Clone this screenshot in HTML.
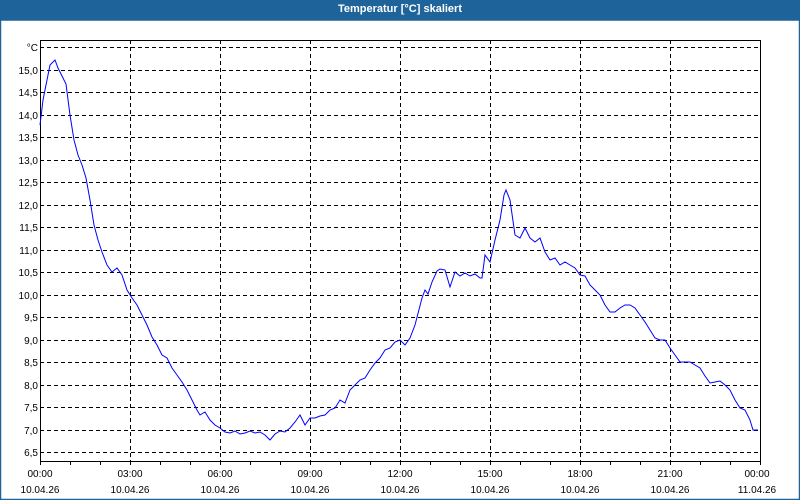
<!DOCTYPE html>
<html><head><style>
html,body{margin:0;padding:0;width:800px;height:500px;overflow:hidden;background:#fff;}
.t{position:absolute;left:0;top:0;width:800px;height:20px;background:#1e6399;color:#fff;font:bold 11px "Liberation Sans",sans-serif;text-align:center;line-height:19px;}
svg{position:absolute;left:0;top:0;}
text{font-family:"Liberation Sans",sans-serif;font-size:10px;fill:#000;}
</style></head><body>
<div class="t">Temperatur [°C] skaliert</div>
<svg width="800" height="500">
<rect x="0.5" y="20" width="799" height="479.5" fill="none" stroke="#1e6399" stroke-width="1.5"/>
<g stroke="#000" stroke-dasharray="4,3" stroke-width="1">
<line x1="40" x2="760" y1="47.5" y2="47.5"/><line x1="40" x2="760" y1="70.5" y2="70.5"/><line x1="40" x2="760" y1="92.5" y2="92.5"/><line x1="40" x2="760" y1="115.5" y2="115.5"/><line x1="40" x2="760" y1="137.5" y2="137.5"/><line x1="40" x2="760" y1="160.5" y2="160.5"/><line x1="40" x2="760" y1="182.5" y2="182.5"/><line x1="40" x2="760" y1="205.5" y2="205.5"/><line x1="40" x2="760" y1="227.5" y2="227.5"/><line x1="40" x2="760" y1="250.5" y2="250.5"/><line x1="40" x2="760" y1="272.5" y2="272.5"/><line x1="40" x2="760" y1="295.5" y2="295.5"/><line x1="40" x2="760" y1="317.5" y2="317.5"/><line x1="40" x2="760" y1="340.5" y2="340.5"/><line x1="40" x2="760" y1="362.5" y2="362.5"/><line x1="40" x2="760" y1="385.5" y2="385.5"/><line x1="40" x2="760" y1="407.5" y2="407.5"/><line x1="40" x2="760" y1="430.5" y2="430.5"/><line x1="40" x2="760" y1="452.5" y2="452.5"/>
<line x1="130.5" x2="130.5" y1="40" y2="461"/><line x1="220.5" x2="220.5" y1="40" y2="461"/><line x1="310.5" x2="310.5" y1="40" y2="461"/><line x1="400.5" x2="400.5" y1="40" y2="461"/><line x1="490.5" x2="490.5" y1="40" y2="461"/><line x1="580.5" x2="580.5" y1="40" y2="461"/><line x1="670.5" x2="670.5" y1="40" y2="461"/>
</g>
<path d="M40.5 461V40.5H760.5V461M40 461.5H761" fill="none" stroke="#000"/>
<g stroke="#000">
<path d="M40.5 461v4M70.5 461v4M100.5 461v4M130.5 461v4M160.5 461v4M190.5 461v4M220.5 461v4M250.5 461v4M280.5 461v4M310.5 461v4M340.5 461v4M370.5 461v4M400.5 461v4M430.5 461v4M460.5 461v4M490.5 461v4M520.5 461v4M550.5 461v4M580.5 461v4M610.5 461v4M640.5 461v4M670.5 461v4M700.5 461v4M730.5 461v4M760.5 461v4"/>
</g>
<g text-anchor="end">
<text x="38" y="51">°C</text><text x="38" y="74">15,0</text><text x="38" y="96">14,5</text><text x="38" y="119">14,0</text><text x="38" y="141">13,5</text><text x="38" y="164">13,0</text><text x="38" y="186">12,5</text><text x="38" y="209">12,0</text><text x="38" y="231">11,5</text><text x="38" y="254">11,0</text><text x="38" y="276">10,5</text><text x="38" y="299">10,0</text><text x="38" y="321">9,5</text><text x="38" y="344">9,0</text><text x="38" y="366">8,5</text><text x="38" y="389">8,0</text><text x="38" y="411">7,5</text><text x="38" y="434">7,0</text><text x="38" y="456">6,5</text>
</g>
<g text-anchor="middle">
<text x="40" y="477">00:00</text><text x="40" y="493">10.04.26</text>
<text x="130" y="477">03:00</text><text x="130" y="493">10.04.26</text>
<text x="220" y="477">06:00</text><text x="220" y="493">10.04.26</text>
<text x="310" y="477">09:00</text><text x="310" y="493">10.04.26</text>
<text x="400" y="477">12:00</text><text x="400" y="493">10.04.26</text>
<text x="490" y="477">15:00</text><text x="490" y="493">10.04.26</text>
<text x="580" y="477">18:00</text><text x="580" y="493">10.04.26</text>
<text x="670" y="477">21:00</text><text x="670" y="493">10.04.26</text>
<text x="757" y="477">00:00</text><text x="757" y="493">11.04.26</text>
</g>
<polyline fill="none" stroke="#0000ff" stroke-width="1" points="40,125 43,100 47,80 50,65 55,60 58,68 63,78 66,84 70,115 74,140 78,155 82,165 86,178 90,200 94,225 98,240 102,252 107,265 112,272 117,268 122,275 127,290 132,298 137,305 142,315 147,325 152,337 157,345 162,355 167,358 172,368 177,375 182,382 187,390 192,400 197,410 200,415 205,412 210,420 215,425 220,428 225,432 230,433 235,431 240,434 245,433 250,431 255,433 260,432 265,435 270,440 275,434 280,431 285,432 290,428 295,422 300,415 305,425 310,418 315,418 320,416 325,415 330,410 335,408 340,400 345,403 350,390 355,385 360,380 365,378 370,370 375,363 380,358 385,350 390,348 395,342 400,340 405,345 410,338 415,325 422,298 425,290 428,294 432,282 437,271 440,269 445,270 450,287 455,272 460,276 465,273 470,276 475,274 480,278 482,278 485,255 490,262 495,240 500,220 504,195 506,190 510,200 515,235 520,238 525,228 530,238 535,242 540,238 545,252 550,260 555,258 560,265 565,262 570,265 575,268 580,275 585,276 590,285 595,290 600,295 605,305 610,312 615,312 620,308 625,305 630,305 635,308 640,315 645,322 650,330 655,338 660,340 665,340 670,348 675,355 680,362 685,362 690,362 695,365 700,368 705,376 710,383 715,382 720,381 725,385 730,390 735,400 740,408 745,410 750,420 753,430 758,430"/>
</svg>
</body></html>
